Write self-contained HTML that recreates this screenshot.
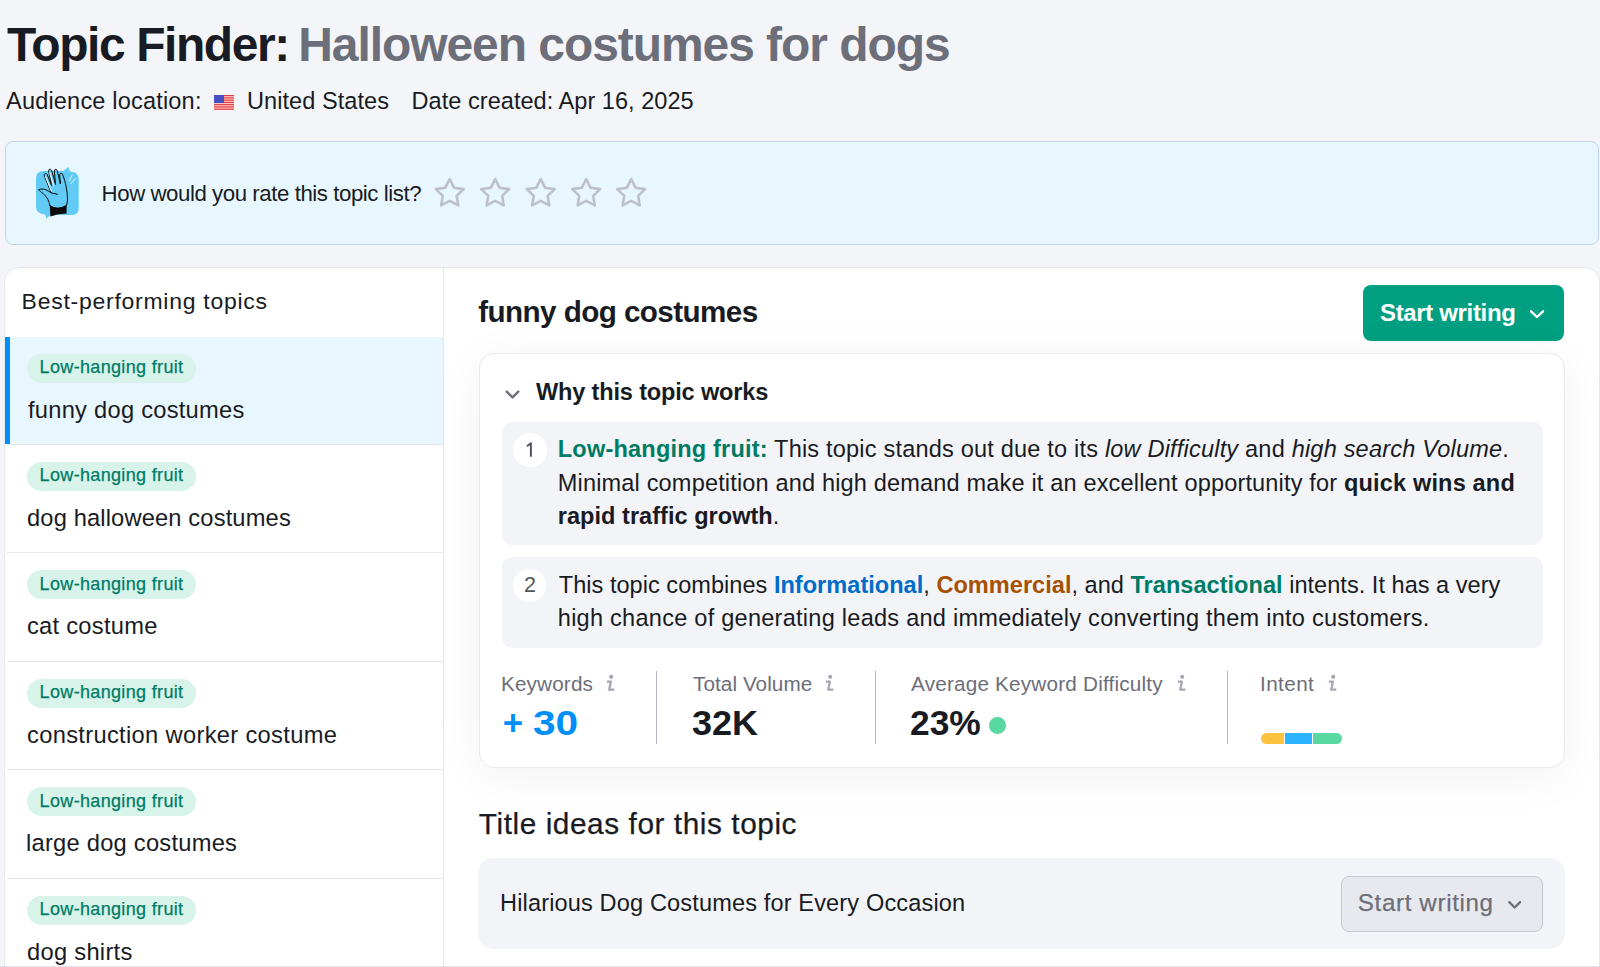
<!DOCTYPE html>
<html><head><meta charset="utf-8"><style>
html,body{margin:0;padding:0;}
body{width:1600px;height:967px;overflow:hidden;background:#f4f5f9;position:relative;font-family:"Liberation Sans",sans-serif;}
.abs{position:absolute;box-sizing:border-box;}
.t{position:absolute;white-space:nowrap;line-height:1;}
.t b{font-weight:700}
.badge{width:169px;height:29px;border-radius:15px;background:#d7f3ea;}
</style></head><body>
<!-- flag -->
<svg class="abs" style="left:214px;top:94.8px" width="20" height="15" viewBox="0 0 20 15"><rect width="20" height="14.8" fill="#ffc9c6"/><g fill="#df3b3b"><rect y="0.000" width="20" height="1.138"/><rect y="2.277" width="20" height="1.138"/><rect y="4.554" width="20" height="1.138"/><rect y="6.831" width="20" height="1.138"/><rect y="9.108" width="20" height="1.138"/><rect y="11.385" width="20" height="1.138"/><rect y="13.662" width="20" height="1.138"/></g><rect width="10" height="8" fill="#4a4fc0"/></svg>
<!-- banner -->
<div class="abs" style="left:5px;top:141px;width:1594px;height:104px;background:#e8f7fe;border:1px solid #c2d6eb;border-radius:8px"></div>
<svg class="abs" style="left:20px;top:160px" width="80" height="70" viewBox="0 0 80 70">
<path d="M16 18.5 Q16 11 23.5 11 L43 11 L48.7 6.9 L49.6 11.2 Q58.7 12 58.7 19 L58.7 48.5 Q58.7 55 52 55 L31 55 L26.2 58.6 L25.3 54.8 Q16 53.5 16 47 Z" fill="#62cbf5"/>
<path d="M29.7 46 C29.5 41 27 37 23.2 33.6 C21 32 19.5 30.6 18.5 29.7 C21.5 28.4 25.5 29 28.2 31 L31.2 32.8 L24.2 15.5 C23.9 13.6 26 12.6 27.1 14.4 L31.6 25.5 L28.6 11 C28.4 9 30.6 8.6 31.6 10.4 L35.6 24.5 L34.3 11 C34.3 9 36.6 8.8 37.2 10.6 L40.4 24 L39.7 14.6 C40 12.8 42 12.8 42.7 14.6 C45.6 22 47.2 30 47.6 40 L46.6 45.3 Q38 51 29.8 45.6 Z" fill="#62cbf5" stroke="#0b0b0b" stroke-width="1.0" stroke-linejoin="round"/>
<path d="M25.4 16.2 L31.6 31.5 M29.6 12 L33.6 25.5" stroke="#e9f8ff" stroke-width="1.1" fill="none"/>
<path d="M31.2 33 Q34.6 33.4 37.8 34.5" stroke="#0b0b0b" stroke-width="1.1" fill="none"/>
<path d="M29.8 45.6 Q38 50.5 46.6 45 L46.6 53.6 Q38 53.8 30.4 56.6 Z" fill="#0b0b0b"/>
<path d="M49.3 21 L52.2 15 M50.7 23.9 L55.8 18.1" stroke="#dff5ff" stroke-width="0.9" fill="none"/>
</svg>
<svg class="abs" style="left:0;top:0" width="700" height="260"><polygon points="449.70,179.00 453.99,187.69 463.59,189.09 456.64,195.86 458.28,205.41 449.70,200.90 441.12,205.41 442.76,195.86 435.81,189.09 445.41,187.69" fill="none" stroke="#bcc0c9" stroke-width="2.6" stroke-linejoin="round"/><polygon points="495.20,179.00 499.49,187.69 509.09,189.09 502.14,195.86 503.78,205.41 495.20,200.90 486.62,205.41 488.26,195.86 481.31,189.09 490.91,187.69" fill="none" stroke="#bcc0c9" stroke-width="2.6" stroke-linejoin="round"/><polygon points="540.70,179.00 544.99,187.69 554.59,189.09 547.64,195.86 549.28,205.41 540.70,200.90 532.12,205.41 533.76,195.86 526.81,189.09 536.41,187.69" fill="none" stroke="#bcc0c9" stroke-width="2.6" stroke-linejoin="round"/><polygon points="586.20,179.00 590.49,187.69 600.09,189.09 593.14,195.86 594.78,205.41 586.20,200.90 577.62,205.41 579.26,195.86 572.31,189.09 581.91,187.69" fill="none" stroke="#bcc0c9" stroke-width="2.6" stroke-linejoin="round"/><polygon points="631.20,179.00 635.49,187.69 645.09,189.09 638.14,195.86 639.78,205.41 631.20,200.90 622.62,205.41 624.26,195.86 617.31,189.09 626.91,187.69" fill="none" stroke="#bcc0c9" stroke-width="2.6" stroke-linejoin="round"/></svg>
<!-- main card -->
<div class="abs" style="left:4px;top:267px;width:1596px;height:720px;background:#fff;border:1px solid #e6e7ec;border-radius:15px"></div>
<div class="abs" style="left:5px;top:336.5px;width:438px;height:107.5px;background:#e8f6fe"></div><div class="abs" style="left:5px;top:336.5px;width:5px;height:107.5px;background:#008ff8"></div><div class="abs badge" style="left:27px;top:353.5px;"></div><div class="abs" style="left:7px;top:444px;width:436px;height:1px;background:#e6e7ed"></div><div class="abs badge" style="left:27px;top:461.9px;"></div><div class="abs" style="left:7px;top:552px;width:436px;height:1px;background:#e6e7ed"></div><div class="abs badge" style="left:27px;top:570.3px;"></div><div class="abs" style="left:7px;top:661px;width:436px;height:1px;background:#e6e7ed"></div><div class="abs badge" style="left:27px;top:678.7px;"></div><div class="abs" style="left:7px;top:769px;width:436px;height:1px;background:#e6e7ed"></div><div class="abs badge" style="left:27px;top:787.1px;"></div><div class="abs" style="left:7px;top:878px;width:436px;height:1px;background:#e6e7ed"></div><div class="abs badge" style="left:27px;top:895.5px;"></div>
<div class="abs" style="left:443px;top:268px;width:1px;height:700px;background:#e6e7ed"></div>
<!-- green button -->
<div class="abs" style="left:1363px;top:285px;width:201px;height:56px;background:#009f81;border-radius:8px"></div>
<svg class="abs" style="left:1528px;top:306px" width="18" height="14"><path d="M3 5.3 L9 11 L15 5.3" fill="none" stroke="#fff" stroke-width="2.4" stroke-linecap="round" stroke-linejoin="round"/></svg>
<!-- inner card -->
<div class="abs" style="left:478.5px;top:353px;width:1086px;height:414.5px;background:#fff;border:1px solid #e9eaee;border-radius:15px;box-shadow:0 8px 50px rgba(0,0,0,0.055)"></div>
<svg class="abs" style="left:503px;top:386px" width="19" height="16"><path d="M3.7 5.6 L9.5 11.4 L15.3 5.6" fill="none" stroke="#6c6e79" stroke-width="2.4" stroke-linecap="round" stroke-linejoin="round"/></svg>
<div class="abs" style="left:501.5px;top:421.5px;width:1041px;height:123px;background:#f3f4f8;border-radius:10px"></div>
<div class="abs" style="left:501.5px;top:557px;width:1041px;height:91px;background:#f3f4f8;border-radius:10px"></div>
<div class="abs" style="left:513px;top:433px;width:33.5px;height:33.5px;background:#fff;border-radius:50%"></div><svg class="abs" style="left:520px;top:436px" width="20" height="24"><path d="M6.9 10.2 L10.9 7.2 L10.9 20.8" fill="none" stroke="#55575f" stroke-width="2" stroke-linejoin="round"/></svg>
<div class="abs" style="left:512.8px;top:568.8px;width:33.5px;height:33px;background:#fff;border-radius:50%"></div>
<div class="abs" style="left:656px;top:670.5px;width:1px;height:73px;background:#b3b6bf"></div>
<div class="abs" style="left:875px;top:670.5px;width:1px;height:73px;background:#b3b6bf"></div>
<div class="abs" style="left:1227px;top:670.5px;width:1px;height:73px;background:#b3b6bf"></div>
<div class="abs" style="left:989px;top:717px;width:16.5px;height:16.5px;background:#59d8a1;border-radius:50%"></div>
<div class="abs" style="left:1261.4px;top:733px;width:81px;height:10.5px;border-radius:5.5px;overflow:hidden;background:#fff">
 <div class="abs" style="left:0;top:0;width:22.5px;height:10.5px;background:#fcc240"></div>
 <div class="abs" style="left:24px;top:0;width:26.5px;height:10.5px;background:#2bb3ff"></div>
 <div class="abs" style="left:52px;top:0;width:29px;height:10.5px;background:#59d8a1"></div>
</div>
<!-- title ideas -->
<div class="abs" style="left:478px;top:858px;width:1086.5px;height:90.5px;background:#f3f4f8;border-radius:15px"></div>
<div class="abs" style="left:1340.5px;top:875.5px;width:202px;height:56.5px;background:#e8e9ee;border:1px solid #c4c7cf;border-radius:8px"></div>
<svg class="abs" style="left:1506px;top:897px" width="18" height="14"><path d="M3.3 5.2 L8.7 10.5 L14.1 5.2" fill="none" stroke="#6c6e79" stroke-width="2.4" stroke-linecap="round" stroke-linejoin="round"/></svg>
<div class="abs" style="left:0;top:966px;width:1600px;height:1px;background:#e4e5ea"></div>
<div class="t" id="h1a" style="left:7.00px;top:21.01px;font-size:47.97px;letter-spacing:-1.417px;font-weight:700;color:#191b23;">Topic Finder:</div>
<div class="t" id="h1b" style="left:298.20px;top:21.01px;font-size:47.97px;letter-spacing:-1.050px;font-weight:700;color:#6c6e79;">Halloween costumes for dogs</div>
<div class="t" id="sub1" style="left:6.00px;top:90.01px;font-size:23.55px;letter-spacing:0.176px;font-weight:400;color:#191b23;">Audience location:</div>
<div class="t" id="sub2" style="left:247.00px;top:90.01px;font-size:23.55px;letter-spacing:0.050px;font-weight:400;color:#191b23;">United States</div>
<div class="t" id="sub3" style="left:411.60px;top:90.01px;font-size:23.55px;letter-spacing:0.024px;font-weight:400;color:#191b23;">Date created: Apr 16, 2025</div>
<div class="t" id="q" style="left:101.60px;top:183.31px;font-size:22.24px;letter-spacing:-0.441px;font-weight:400;color:#191b23;">How would you rate this topic list?</div>
<div class="t" id="bpt" style="left:21.60px;top:289.60px;font-size:22.97px;letter-spacing:0.748px;font-weight:400;color:#191b23;">Best-performing topics</div>
<div class="t" id="badge0" style="left:39.60px;top:358.01px;font-size:18.02px;letter-spacing:0.331px;font-weight:400;color:#007c65;-webkit-text-stroke:0.25px currentColor;">Low-hanging fruit</div>
<div class="t" id="row0" style="left:28.00px;top:398.51px;font-size:23.69px;letter-spacing:0.250px;font-weight:400;color:#191b23;">funny dog costumes</div>
<div class="t" id="badge1" style="left:39.60px;top:466.40px;font-size:18.02px;letter-spacing:0.331px;font-weight:400;color:#007c65;-webkit-text-stroke:0.25px currentColor;">Low-hanging fruit</div>
<div class="t" id="row1" style="left:27.00px;top:506.90px;font-size:23.69px;letter-spacing:0.143px;font-weight:400;color:#191b23;">dog halloween costumes</div>
<div class="t" id="badge2" style="left:39.60px;top:574.81px;font-size:18.02px;letter-spacing:0.331px;font-weight:400;color:#007c65;-webkit-text-stroke:0.25px currentColor;">Low-hanging fruit</div>
<div class="t" id="row2" style="left:27.00px;top:615.31px;font-size:23.69px;letter-spacing:0.270px;font-weight:400;color:#191b23;">cat costume</div>
<div class="t" id="badge3" style="left:39.60px;top:683.21px;font-size:18.02px;letter-spacing:0.331px;font-weight:400;color:#007c65;-webkit-text-stroke:0.25px currentColor;">Low-hanging fruit</div>
<div class="t" id="row3" style="left:27.00px;top:723.70px;font-size:23.69px;letter-spacing:0.323px;font-weight:400;color:#191b23;">construction worker costume</div>
<div class="t" id="badge4" style="left:39.60px;top:791.60px;font-size:18.02px;letter-spacing:0.331px;font-weight:400;color:#007c65;-webkit-text-stroke:0.25px currentColor;">Low-hanging fruit</div>
<div class="t" id="row4" style="left:26.00px;top:832.10px;font-size:23.69px;letter-spacing:0.247px;font-weight:400;color:#191b23;">large dog costumes</div>
<div class="t" id="badge5" style="left:39.60px;top:900.01px;font-size:18.02px;letter-spacing:0.331px;font-weight:400;color:#007c65;-webkit-text-stroke:0.25px currentColor;">Low-hanging fruit</div>
<div class="t" id="row5" style="left:27.00px;top:940.51px;font-size:23.69px;letter-spacing:0.289px;font-weight:400;color:#191b23;">dog shirts</div>
<div class="t" id="topic" style="left:478.20px;top:297.01px;font-size:29.65px;letter-spacing:-0.576px;font-weight:700;color:#191b23;">funny dog costumes</div>
<div class="t" id="btn1" style="left:1380.00px;top:301.01px;font-size:23.98px;letter-spacing:-0.333px;font-weight:700;color:#ffffff;">Start writing</div>
<div class="t" id="why" style="left:536.00px;top:381.01px;font-size:23.55px;letter-spacing:-0.168px;font-weight:700;color:#191b23;">Why this topic works</div>
<div class="t" id="p1a" style="left:557.80px;top:437.60px;font-size:23.55px;letter-spacing:0.187px;font-weight:400;color:#191b23;"><b style="color:#007c65">Low-hanging fruit:</b> This topic stands out due to its <i>low Difficulty</i> and <i>high search Volume</i>.</div>
<div class="t" id="p1b" style="left:557.80px;top:472.01px;font-size:23.55px;letter-spacing:0.155px;font-weight:400;color:#191b23;">Minimal competition and high demand make it an excellent opportunity for <b>quick wins and</b></div>
<div class="t" id="p1c" style="left:557.80px;top:505.31px;font-size:23.55px;letter-spacing:0.020px;font-weight:400;color:#191b23;"><b>rapid traffic growth</b>.</div>
<div class="t" id="n2" style="left:523.90px;top:575.30px;font-size:21.51px;letter-spacing:0.000px;font-weight:400;color:#55575f;">2</div>
<div class="t" id="p2a" style="left:558.80px;top:573.51px;font-size:23.55px;letter-spacing:0.022px;font-weight:400;color:#191b23;">This topic combines <b style="color:#006dca">Informational</b>, <b style="color:#a65000">Commercial</b>, and <b style="color:#007c65">Transactional</b> intents. It has a very</div>
<div class="t" id="p2b" style="left:557.80px;top:607.20px;font-size:23.55px;letter-spacing:0.249px;font-weight:400;color:#191b23;">high chance of generating leads and immediately converting them into customers.</div>
<div class="t" id="m1" style="left:501.00px;top:674.25px;font-size:20.71px;letter-spacing:0.143px;font-weight:400;color:#6c6e79;">Keywords</div>
<div class="t" id="m2" style="left:693.00px;top:674.25px;font-size:20.71px;letter-spacing:0.068px;font-weight:400;color:#6c6e79;">Total Volume</div>
<div class="t" id="m3" style="left:911.00px;top:674.25px;font-size:20.71px;letter-spacing:0.200px;font-weight:400;color:#6c6e79;">Average Keyword Difficulty</div>
<div class="t" id="m4" style="left:1260.00px;top:674.25px;font-size:20.71px;letter-spacing:0.400px;font-weight:400;color:#6c6e79;">Intent</div>
<div class="t" id="v1a" style="left:502.75px;top:706.00px;font-size:34.88px;letter-spacing:0.000px;font-weight:700;color:#008ff8;">+</div>
<div class="t" id="v1b" style="left:533.40px;top:706.00px;font-size:34.88px;letter-spacing:0.000px;font-weight:700;color:#008ff8;transform:scaleX(1.1626);transform-origin:0 0;">30</div>
<div class="t" id="v2" style="left:691.97px;top:706.00px;font-size:34.88px;letter-spacing:0.000px;font-weight:700;color:#191b23;transform:scaleX(1.0330);transform-origin:0 0;">32K</div>
<div class="t" id="v3" style="left:909.99px;top:706.00px;font-size:34.88px;letter-spacing:0.000px;font-weight:700;color:#191b23;transform:scaleX(1.0147);transform-origin:0 0;">23%</div>
<div class="t" id="tit" style="left:478.80px;top:808.71px;font-size:29.80px;letter-spacing:0.564px;font-weight:400;color:#191b23;-webkit-text-stroke:0.25px currentColor;">Title ideas for this topic</div>
<div class="t" id="hil" style="left:500.00px;top:891.60px;font-size:23.55px;letter-spacing:0.145px;font-weight:400;color:#191b23;">Hilarious Dog Costumes for Every Occasion</div>
<div class="t" id="btn2" style="left:1357.80px;top:890.82px;font-size:24.13px;letter-spacing:0.654px;font-weight:400;color:#6c6e79;-webkit-text-stroke:0.25px currentColor;">Start writing</div>
<svg class="abs" style="left:605.0px;top:674px" width="14" height="18"><circle cx="6.2" cy="2.85" r="2.1" fill="#a5a8b3"/><path d="M1.9 7.7 L5.9 7.7 L4.2 15.7 L9.3 15.7" fill="none" stroke="#a5a8b3" stroke-width="2.3" stroke-linejoin="round"/></svg><svg class="abs" style="left:824.0px;top:674px" width="14" height="18"><circle cx="6.2" cy="2.85" r="2.1" fill="#a5a8b3"/><path d="M1.9 7.7 L5.9 7.7 L4.2 15.7 L9.3 15.7" fill="none" stroke="#a5a8b3" stroke-width="2.3" stroke-linejoin="round"/></svg><svg class="abs" style="left:1175.5px;top:674px" width="14" height="18"><circle cx="6.2" cy="2.85" r="2.1" fill="#a5a8b3"/><path d="M1.9 7.7 L5.9 7.7 L4.2 15.7 L9.3 15.7" fill="none" stroke="#a5a8b3" stroke-width="2.3" stroke-linejoin="round"/></svg><svg class="abs" style="left:1327.0px;top:674px" width="14" height="18"><circle cx="6.2" cy="2.85" r="2.1" fill="#a5a8b3"/><path d="M1.9 7.7 L5.9 7.7 L4.2 15.7 L9.3 15.7" fill="none" stroke="#a5a8b3" stroke-width="2.3" stroke-linejoin="round"/></svg>
</body></html>
